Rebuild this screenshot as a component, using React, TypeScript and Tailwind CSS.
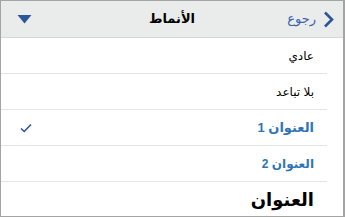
import React from "react";

const font = { fontFamily: '"Liberation Sans", "DejaVu Sans", sans-serif' };

const Row = ({ children, last }: { children: React.ReactNode; last?: boolean }) => (
    <div className="flex h-[36px] items-center">
        <div className={`mr-[16px] flex h-full flex-1 items-center justify-between pr-[13px] pl-[19px] ${last ? "" : "border-b border-[#e4e4e4]"}`}>
            {children}
        </div>
    </div>
);

export default function App() {
    return (
        <div dir="rtl" style={font} className="w-[345px] h-[217px] overflow-hidden border border-r-2 border-[#a4a4a4] bg-white">
            <div className="relative flex h-[37px] items-center justify-between border-b border-[#d6d6d6] bg-[#eaeceb] pr-[9px] pl-[16px]">
                <div className="flex items-center gap-[7px]">
                    <svg width="11" height="17" viewBox="0 0 11 17">
                        <path d="M2 1.5 L9 8.5 L2 15.5" fill="none" stroke="#2b579a" strokeWidth="2.6" />
                    </svg>
                    <span className="text-[13px] text-[#3a62a8]">رجوع</span>
                </div>
                <span className="absolute left-1/2 -translate-x-1/2 text-[13px] font-bold text-black">الأنماط</span>
                <svg width="15" height="10" viewBox="0 0 15 10">
                    <path d="M0.5 1 H14.5 L7.5 9.5 Z" fill="#2b579a" />
                </svg>
            </div>
            <Row>
                <span className="text-[12px] text-black">عادي</span>
            </Row>
            <Row>
                <span className="text-[12px] text-black">بلا تباعد</span>
            </Row>
            <Row>
                <span className="text-[13px] font-bold text-[#2e74b5]">العنوان 1</span>
                <svg width="12" height="10" viewBox="0 0 12 10">
                    <path d="M1 5.5 L4.2 8.5 L11 1.5" fill="none" stroke="#2b579a" strokeWidth="1.6" />
                </svg>
            </Row>
            <Row>
                <span className="text-[12px] font-bold text-[#2e74b5]">العنوان 2</span>
            </Row>
            <Row last>
                <span className="text-[18px] font-bold text-black">العنوان</span>
            </Row>
        </div>
    );
}
